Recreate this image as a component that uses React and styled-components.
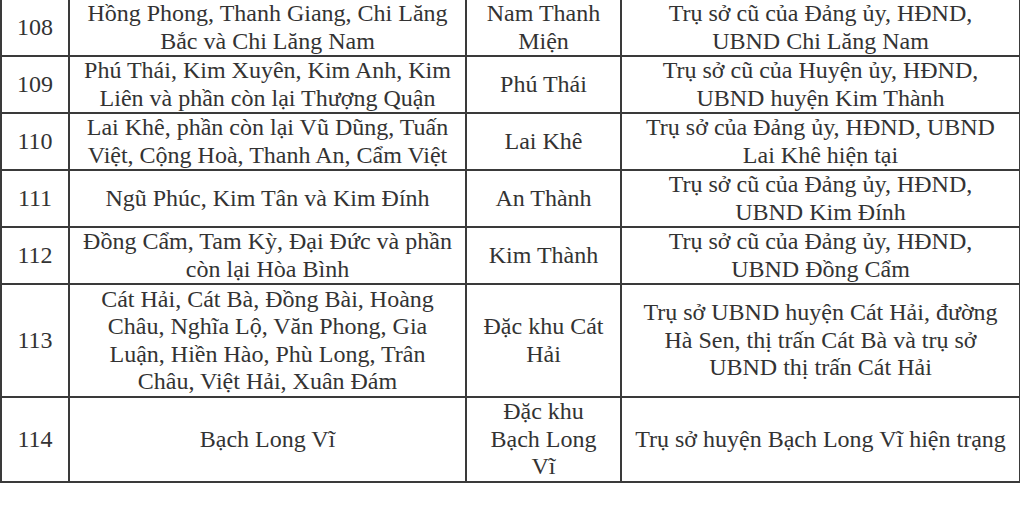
import React from "react";
import styled, { createGlobalStyle } from "styled-components";

const GlobalStyle = createGlobalStyle`
  html, body {
    margin: 0;
    padding: 0;
    background: #ffffff;
  }
`;

const Page = styled.div`
  width: 1020px;
  height: 515px;
  background: #ffffff;
  overflow: hidden;
`;

const Table = styled.table`
  width: 1019px;
  border-collapse: collapse;
  table-layout: fixed;
  font-family: "Liberation Serif", "Times New Roman", serif;
  font-size: 24px;
  line-height: 27.5px;
  color: #333333;
`;

const Row = styled.tr`
  &:first-child td {
    border-top: none;
  }
`;

const Cell = styled.td`
  border: 2px solid #3a3a3a;
  padding: 0;
  text-align: center;
  vertical-align: middle;
  height: ${(props) => props.$h}px;
`;

const Line = styled.span`
  display: block;
  white-space: nowrap;
`;

const rows = [
  {
    no: "108",
    wards: ["Hồng Phong, Thanh Giang, Chi Lăng", "Bắc và Chi Lăng Nam"],
    name: ["Nam Thanh", "Miện"],
    seat: ["Trụ sở cũ của Đảng ủy, HĐND,", "UBND Chi Lăng Nam"],
    h: 55,
  },
  {
    no: "109",
    wards: ["Phú Thái, Kim Xuyên, Kim Anh, Kim", "Liên và phần còn lại Thượng Quận"],
    name: ["Phú Thái"],
    seat: ["Trụ sở cũ của Huyện ủy, HĐND,", "UBND huyện Kim Thành"],
    h: 55,
  },
  {
    no: "110",
    wards: ["Lai Khê, phần còn lại Vũ Dũng, Tuấn", "Việt, Cộng Hoà, Thanh An, Cẩm Việt"],
    name: ["Lai Khê"],
    seat: ["Trụ sở của Đảng ủy, HĐND, UBND", "Lai Khê hiện tại"],
    h: 55,
  },
  {
    no: "111",
    wards: ["Ngũ Phúc, Kim Tân và Kim Đính"],
    name: ["An Thành"],
    seat: ["Trụ sở cũ của Đảng ủy, HĐND,", "UBND Kim Đính"],
    h: 55,
  },
  {
    no: "112",
    wards: ["Đồng Cẩm, Tam Kỳ, Đại Đức và phần", "còn lại Hòa Bình"],
    name: ["Kim Thành"],
    seat: ["Trụ sở cũ của Đảng ủy, HĐND,", "UBND Đồng Cẩm"],
    h: 55,
  },
  {
    no: "113",
    wards: [
      "Cát Hải, Cát Bà, Đồng Bài, Hoàng",
      "Châu, Nghĩa Lộ, Văn Phong, Gia",
      "Luận, Hiền Hào, Phù Long, Trân",
      "Châu, Việt Hải, Xuân Đám",
    ],
    name: ["Đặc khu Cát", "Hải"],
    seat: ["Trụ sở UBND huyện Cát Hải, đường", "Hà Sen, thị trấn Cát Bà và trụ sở", "UBND thị trấn Cát Hải"],
    h: 111,
  },
  {
    no: "114",
    wards: ["Bạch Long Vĩ"],
    name: ["Đặc khu", "Bạch Long", "Vĩ"],
    seat: ["Trụ sở huyện Bạch Long Vĩ hiện trạng"],
    h: 82,
  },
];

const Lines = ({ items }) => items.map((t) => <Line key={t}>{t}</Line>);

export default function App() {
  return (
    <Page>
      <GlobalStyle />
      <Table>
        <colgroup>
          <col style={{ width: 68 }} />
          <col style={{ width: 397 }} />
          <col style={{ width: 155 }} />
          <col style={{ width: 399 }} />
        </colgroup>
        <tbody>
          {rows.map((r) => (
            <Row key={r.no}>
              <Cell $h={r.h}>{r.no}</Cell>
              <Cell $h={r.h}>
                <Lines items={r.wards} />
              </Cell>
              <Cell $h={r.h}>
                <Lines items={r.name} />
              </Cell>
              <Cell $h={r.h}>
                <Lines items={r.seat} />
              </Cell>
            </Row>
          ))}
        </tbody>
      </Table>
    </Page>
  );
}
